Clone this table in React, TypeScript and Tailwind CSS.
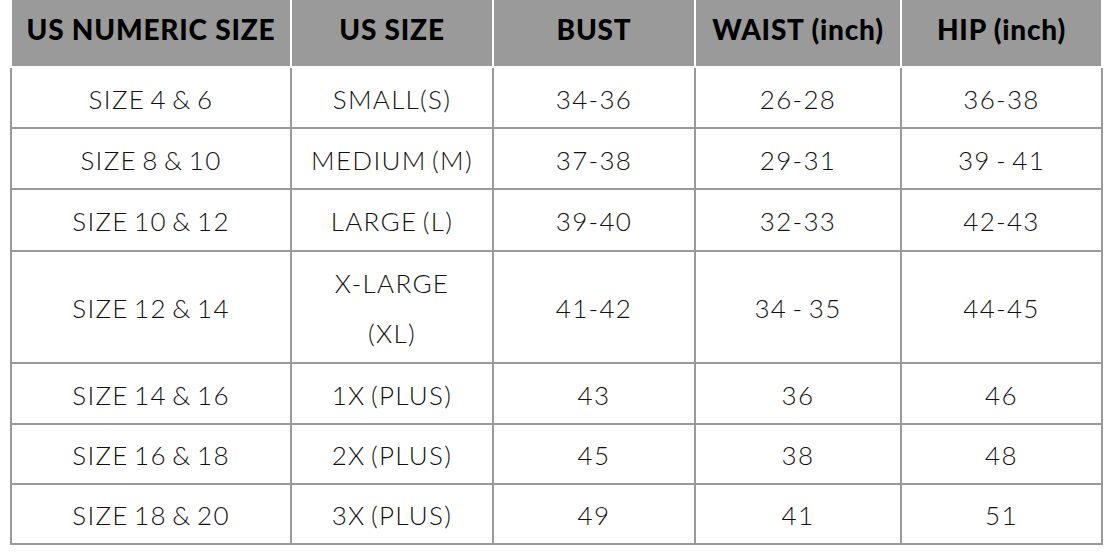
const headers = ["US NUMERIC SIZE", "US SIZE", "BUST", "WAIST (inch)", "HIP (inch)"];

const rows: string[][] = [
  ["SIZE 4 & 6", "SMALL(S)", "34-36", "26-28", "36-38"],
  ["SIZE 8 & 10", "MEDIUM (M)", "37-38", "29-31", "39 - 41"],
  ["SIZE 10 & 12", "LARGE (L)", "39-40", "32-33", "42-43"],
  ["SIZE 12 & 14", "X-LARGE\n(XL)", "41-42", "34 - 35", "44-45"],
  ["SIZE 14 & 16", "1X (PLUS)", "43", "36", "46"],
  ["SIZE 16 & 18", "2X (PLUS)", "45", "38", "48"],
  ["SIZE 18 & 20", "3X (PLUS)", "49", "41", "51"],
];

const widths = ["w-[278px]", "w-[200px]", "w-[200px]", "w-[204px]", "w-[199px]"];

export default function App() {
  return (
    <div
      className="w-[1116px] h-[556px] bg-white overflow-hidden text-black"
      style={{ fontFamily: "Lato, 'Liberation Sans', sans-serif" }}
    >
      {/* header */}
      <div className="ml-[12px] flex gap-[2px] h-[66px]">
        {headers.map((h, i) => (
          <div
            key={h}
            className={`${widths[i]} bg-[#9a9a9a] flex items-center justify-center pb-[8px] text-[28px] font-black tracking-[0.8px] whitespace-nowrap`}
          >
            {h}
          </div>
        ))}
      </div>

      {/* body */}
      <div className="ml-[10px] mt-[2px] w-[1093px] bg-[#9a9a9a] px-[2px] pb-[2px] grid grid-cols-[278px_200px_200px_204px_199px] grid-rows-[59px_59px_60px_110px_59px_58px_58px] gap-[2px]">
        {rows.map((r, ri) =>
          r.map((c, ci) => (
            <div
              key={`${ri}-${ci}`}
              className="bg-white flex flex-col items-center justify-center text-[26px] font-light tracking-[1.3px] [word-spacing:-3px] leading-[50px] pt-[2px] text-[#111]"
            >
              {c.split("\n").map((line) => (
                <span key={line}>{line}</span>
              ))}
            </div>
          ))
        )}
      </div>
    </div>
  );
}
